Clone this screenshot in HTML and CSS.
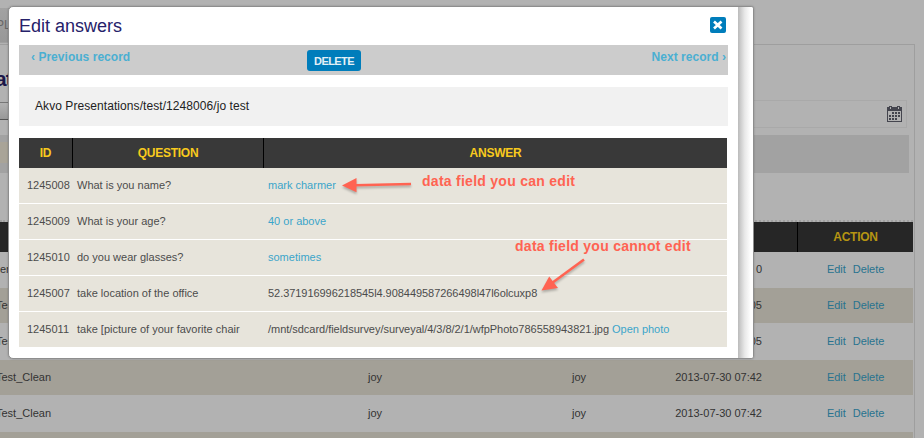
FILE: index.html
```html
<!DOCTYPE html>
<html lang="en">
<head>
<meta charset="utf-8">
<title>Edit answers</title>
<link rel="stylesheet" href="styles.css">
</head>
<body>
<div class="page">
  <div class="tabs"><span>PL</span></div>
  <div class="panel">
    <h1 class="heading">at</h1>
    <div class="date-row">
      <div class="slider"></div>
      <div class="date-field">
        <svg class="calendar" viewBox="0 0 15 16" width="15" height="16">
          <path fill="#44454e" fill-rule="evenodd" d="M0 1h2V0h3v1h5V0h3v1h2v15H0zM1 5v10h13V5zM3 1v2h1V1zM11 1v2h1V1z"/>
          <path fill="#44454e" d="M5 6h2v2H5zM8 6h2v2H8zM11 6h2v2h-2zM2 9h2v2H2zM5 9h2v2H5zM8 9h2v2H8zM11 9h2v2h-2zM2 12h2v2H2zM5 12h2v2H5zM8 12h2v2H8z"/>
        </svg>
      </div>
    </div>
    <div class="filter"><div class="filter-field"></div></div>
    <div class="data">
      <div class="data-row data-head"><span></span><span></span><span></span><span></span><span class="action-head">ACTION</span></div>
      <div class="data-row"><span class="name">er</span><span>joy</span><span>joy</span><span class="date">2013-07-30 08 0</span><span class="actions"><a>Edit</a><a>Delete</a></span></div>
      <div class="data-row tan"><span class="name">Test_Clean</span><span>joy</span><span>joy</span><span class="date">2013-07-30 08:05</span><span class="actions"><a>Edit</a><a>Delete</a></span></div>
      <div class="data-row"><span class="name">Test_Clean</span><span>joy</span><span>joy</span><span class="date">2013-07-30 08:05</span><span class="actions"><a>Edit</a><a>Delete</a></span></div>
      <div class="data-row tan"><span class="name">Test_Clean</span><span>joy</span><span>joy</span><span class="date">2013-07-30 07:42</span><span class="actions"><a>Edit</a><a>Delete</a></span></div>
      <div class="data-row"><span class="name">Test_Clean</span><span>joy</span><span>joy</span><span class="date">2013-07-30 07:42</span><span class="actions"><a>Edit</a><a>Delete</a></span></div>
      <div class="data-row tan"></div>
    </div>
  </div>
</div>

<div class="modal">
  <div class="content">
    <div class="title-row">
      <h2>Edit answers</h2>
      <svg class="close" viewBox="0 0 16 16" width="16" height="16">
        <rect width="16" height="16" rx="2" fill="#007dbb"/>
        <path d="M4 4.500 11.500 11.500M11.500 4.500 4 11.500" stroke="#fff" stroke-width="2.700"/>
      </svg>
    </div>
    <div class="nav">
      <a class="prev">‹ Previous record</a>
      <span class="delete">DELETE</span>
      <a class="next">Next record ›</a>
    </div>
    <div class="crumb">Akvo Presentations/test/1248006/jo test</div>
    <div class="answers">
      <div class="row head"><span>ID</span><span>QUESTION</span><span>ANSWER</span></div>
      <div class="row"><span>1245008</span><span>What is you name?</span><span><a>mark charmer</a></span></div>
      <div class="row"><span>1245009</span><span>What is your age?</span><span><a>40 or above</a></span></div>
      <div class="row"><span>1245010</span><span>do you wear glasses?</span><span><a>sometimes</a></span></div>
      <div class="row"><span>1245007</span><span>take location of the office</span><span class="geo">52.371916996218545l4.908449587266498l47l6olcuxp8</span></div>
      <div class="row"><span>1245011</span><span>take [picture of your favorite chair</span><span class="path">/mnt/sdcard/fieldsurvey/surveyal/4/3/8/2/1/wfpPhoto786558943821.jpg <a>Open photo</a></span></div>
    </div>
  </div>
  <div class="edge"></div>
</div>

<svg class="arrows" viewBox="0 0 924 438" width="924" height="438">
  <g fill="#ff6352" stroke="#ff6352">
    <path d="M355 185.2 411 184" stroke-width="2.6"/>
    <path d="M342 185.5 356.500 178V192.300z" stroke="none"/>
    <path d="M584 259.500 552 283" stroke-width="2.6"/>
    <path d="M541.500 290.500 549.200 276.500 558 288z" stroke="none"/>
  </g>
</svg>
<div class="note note-can">data field you can edit</div>
<div class="note note-cannot">data field you cannot edit</div>
</body>
</html>
```

FILE: styles.css
```css
* { box-sizing: border-box; }
body {
  margin: 0;
  width: 924px;
  height: 438px;
  overflow: hidden;
  position: relative;
  background: #b2b2b2;
  font: 11px/16px "Liberation Sans", Arial, sans-serif;
  color: #333;
}
h1, h2 { margin: 0; }
.page { padding-top: 8px; height: 438px; overflow: hidden; }
.tabs {
  width: 12px;
  height: 35px;
  padding-top: 9px;
  background: linear-gradient(#a2a2a2, #989898);
  border-bottom: 1px solid #a0a0a0;
  color: #666;
  font-size: 12px;
  overflow: hidden;
}
.tabs span { margin-left: -4px; }
.panel {
  width: 915px;
  height: 395px;
  margin-top: 1px;
  border-top: 1px solid #9e9e9e;
  border-right: 1px solid #9e9e9e;
  overflow: hidden;
}
.heading {
  height: 55px;
  padding-top: 24px;
  margin-left: -5px;
  font-size: 21px;
  line-height: 20px;
  letter-spacing: -1px;
  color: #1b1749;
}
.date-row { display: flex; justify-content: space-between; height: 35px; }
.slider {
  width: 20px;
  height: 18px;
  margin-top: 2px;
  border-top: 1px solid #777;
  border-bottom: 1px solid #555;
  background: linear-gradient(#b2b2b2, #999);
}
.date-field {
  display: flex;
  justify-content: flex-end;
  width: 300px;
  height: 28px;
  margin-right: 7px;
  padding: 5px 4px 0 0;
  border: 1px solid #a9a9a9;
}
.filter { width: 909px; height: 38px; padding-top: 7px; background: #a2a2a2; }
.filter-field { width: 20px; height: 21px; background: #a9a498; }
.data { width: 913px; margin-top: 47px; border-top: 2px dotted #a0a0a0; }
.data-row {
  display: grid;
  grid-template-columns: 273px 204px 204px 116px 116px;
  height: 36px;
  line-height: 34px;
  text-align: center;
}
.data-row.tan { background: #a3a097; border-bottom: 1px solid #b2b2b2; }
.data-row.data-head { height: 30px; line-height: 30px; background: #262626; }
.action-head {
  border-left: 1px solid #000;
  color: #b69512;
  font-size: 12px;
  font-weight: bold;
  letter-spacing: -.25px;
}
.data-row .name { text-align: left; margin-left: -4px; }
.data-head + .data-row .name { margin-left: 0; }
.data-row .date { display: flex; justify-content: flex-end; padding-right: 35px; white-space: nowrap; }
.actions { display: flex; gap: 7px; padding-left: 30px; letter-spacing: -.05px; }
.actions a { color: #27738f; }

.modal {
  position: absolute;
  left: 8px;
  top: 6px;
  width: 746px;
  height: 353px;
  display: flex;
  background: #fff;
  border: 1px solid #8e8e8e;
  border-radius: 5px 3px 3px 5px;
  box-shadow: 0 0 2px rgba(0, 0, 0, .25);
  overflow: hidden;
}
.content { width: 729px; padding: 0 10px; }
.edge { width: 15px; background: linear-gradient(90deg, #bbb, #e8e8e8 45%, #fff 85%); }
.title-row { display: flex; justify-content: space-between; width: 707px; height: 38px; padding-top: 10px; }
.title-row h2 { font-size: 18px; line-height: 18px; font-weight: normal; color: #26216a; }
.nav {
  display: grid;
  grid-template-columns: 288px 54px 1fr;
  width: 709px;
  height: 30px;
  padding-top: 5px;
  background: #ccc;
  font-weight: bold;
}
.nav a { color: #4aafd2; font-size: 12px; line-height: 14px; letter-spacing: .03px; }
.prev { padding-left: 12px; }
.next { text-align: right; padding-right: 2px; }
.delete {
  height: 21px;
  line-height: 22px;
  text-align: center;
  color: #e4f0f6;
  background: #007dbb;
  border-radius: 3px;
  letter-spacing: -.6px;
}
.crumb {
  width: 709px;
  height: 39px;
  margin-top: 12px;
  padding-left: 16px;
  background: #f1f1f1;
  color: #222;
  font-size: 12px;
  line-height: 38px;
  letter-spacing: .07px;
}
.answers { width: 708px; margin-top: 12px; }
.row {
  display: grid;
  grid-template-columns: 53px 191px 1fr;
  height: 36px;
  line-height: 35px;
  color: #4c4c4c;
  background: #e7e4db;
  border-bottom: 1px solid #fff;
  white-space: nowrap;
}
.row span { padding-left: 5px; }
.row span:first-child { padding-left: 8px; }
.row a { color: #3ba5ca; }
.row .geo { letter-spacing: -.05px; }
.row .path { letter-spacing: -.03px; }
.row.head {
  grid-template-columns: 54px 191px 1fr;
  height: 30px;
  line-height: 30px;
  background: #393939;
  border: 0;
  font-size: 12px;
  font-weight: bold;
  text-align: center;
  color: #f8ca1d;
  letter-spacing: -.25px;
}
.row.head span { height: 30px; padding: 0; border-right: 1px solid #000; }
.row.head span:last-child { border: 0; }
.arrows { position: absolute; left: 0; top: 0; filter: drop-shadow(0 2px 1px rgba(0, 0, 0, .25)); }
.note {
  position: absolute;
  font-size: 14px;
  font-weight: bold;
  line-height: 16px;
  color: #ff6352;
  letter-spacing: .27px;
  white-space: nowrap;
}
.note-can { left: 422px; top: 173px; }
.note-cannot { left: 515px; top: 238px; }
```
